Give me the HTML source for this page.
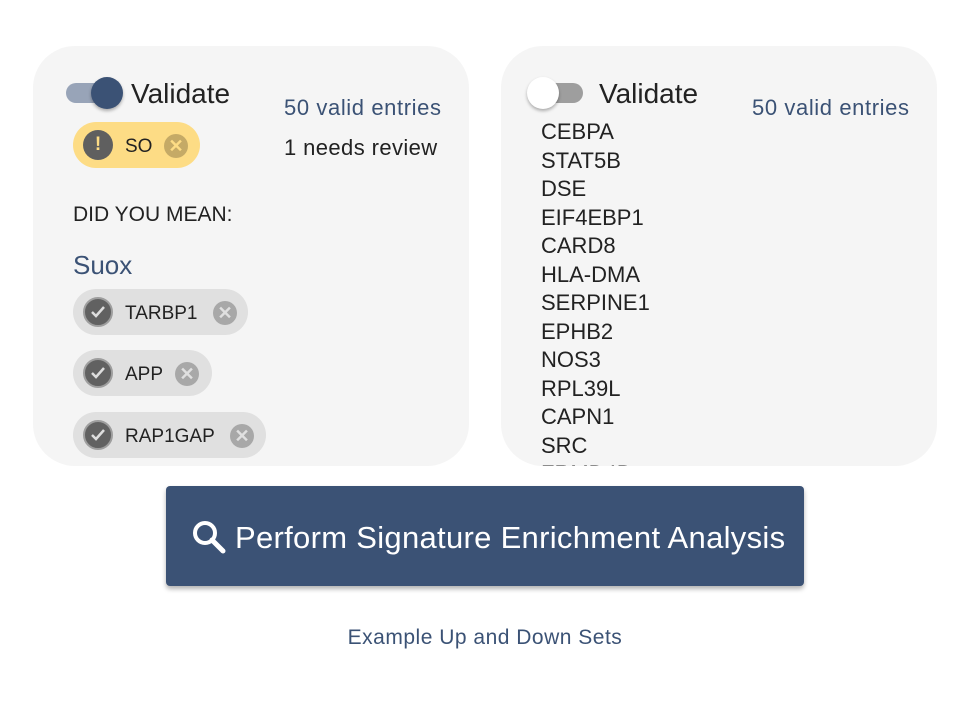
<!DOCTYPE html>
<html><head><style>
body{margin:0;width:974px;height:716px;background:#fff;font-family:"Liberation Sans",sans-serif;position:relative;overflow:hidden;color:#222}
.card{position:absolute;top:46px;width:436px;height:420px;background:#f5f5f5;border-radius:42px;overflow:hidden}
.a{position:absolute;white-space:nowrap}
.blue{color:#3b5275}
.tog{position:absolute;width:44px;height:20px;border-radius:10px}
.knob{position:absolute;width:32px;height:32px;border-radius:50%;box-shadow:0 2px 3px rgba(0,0,0,.3)}
.chip{position:absolute;height:46px;border-radius:23px;background:#e0e0e0;font-size:19px}
.ck{position:absolute;left:10px;top:8px;width:30px;height:30px;border-radius:50%;background:#616161;border:2px solid #9e9e9e;box-sizing:border-box}
.x{position:absolute;top:12px;width:24px;height:24px;border-radius:50%;background:#a8a8a8;color:#e0e0e0;font-size:18px;line-height:24px;text-align:center;font-weight:bold}
.list div{height:28.5px;font-size:22px;line-height:28.5px}
</style></head><body>
<div class="card" style="left:33px">
  <div class="tog" style="left:33px;top:37px;background:#98a4b8"></div>
  <div class="knob" style="left:58px;top:31px;background:#3b5275"></div>
  <div class="a" style="left:98px;top:32px;font-size:28px">Validate</div>
  <div class="a blue" style="left:251px;top:49px;font-size:22px;letter-spacing:.6px">50 valid entries</div>
  <div class="a" style="left:251px;top:89px;font-size:22px;letter-spacing:.4px">1 needs review</div>
  <div class="chip" style="left:40px;top:76px;width:127px;background:#fddc85">
    <div style="position:absolute;left:10px;top:8px;width:30px;height:30px;border-radius:50%;background:#5f5f5f;color:#fddc85;text-align:center;font-weight:bold;font-size:19px;line-height:30px">!</div>
    <div class="a" style="left:52px;top:14px">SO</div>
    <div class="x" style="left:91px;background:#c5aa66;color:#fddc85">✕</div>
  </div>
  <div class="a" style="left:40px;top:157px;font-size:21px">DID YOU MEAN:</div>
  <div class="a blue" style="left:40px;top:204px;font-size:26px">Suox</div>
  <div class="chip" style="left:40px;top:243px;width:175px"><div class="ck"></div><svg class="a" style="left:17px;top:16px" width="16" height="14"><path d="M2 7l4 4 8-9" stroke="#ddd" stroke-width="2.5" fill="none"/></svg><div class="a" style="left:52px;top:14px">TARBP1</div><div class="x" style="left:140px">✕</div></div>
  <div class="chip" style="left:40px;top:304px;width:139px"><div class="ck"></div><svg class="a" style="left:17px;top:16px" width="16" height="14"><path d="M2 7l4 4 8-9" stroke="#ddd" stroke-width="2.5" fill="none"/></svg><div class="a" style="left:52px;top:14px">APP</div><div class="x" style="left:102px">✕</div></div>
  <div class="chip" style="left:40px;top:366px;width:193px"><div class="ck"></div><svg class="a" style="left:17px;top:16px" width="16" height="14"><path d="M2 7l4 4 8-9" stroke="#ddd" stroke-width="2.5" fill="none"/></svg><div class="a" style="left:52px;top:14px">RAP1GAP</div><div class="x" style="left:157px">✕</div></div>
</div>
<div class="card" style="left:501px">
  <div class="tog" style="left:38px;top:37px;background:#9e9e9e"></div>
  <div class="knob" style="left:26px;top:31px;background:#fff"></div>
  <div class="a" style="left:98px;top:32px;font-size:28px">Validate</div>
  <div class="a blue" style="left:251px;top:49px;font-size:22px;letter-spacing:.6px">50 valid entries</div>
  <div class="a list" style="left:40px;top:72px">
    <div>CEBPA</div><div>STAT5B</div><div>DSE</div><div>EIF4EBP1</div><div>CARD8</div><div>HLA-DMA</div><div>SERPINE1</div><div>EPHB2</div><div>NOS3</div><div>RPL39L</div><div>CAPN1</div><div>SRC</div><div>FRMD4B</div>
  </div>
</div>
<div class="a" style="left:166px;top:486px;width:638px;height:100px;background:#3b5275;border-radius:4px;box-shadow:0 3px 5px rgba(0,0,0,.3)">
  <svg class="a" style="left:25px;top:33px" width="36" height="36"><circle cx="14" cy="14" r="10" stroke="#fff" stroke-width="4" fill="none"/><path d="M21 21l11 11" stroke="#fff" stroke-width="5" stroke-linecap="round"/></svg>
  <div class="a" style="left:69px;top:34px;font-size:31px;letter-spacing:.3px;color:#fff">Perform Signature Enrichment Analysis</div>
</div>
<div class="a blue" style="left:0;width:970px;text-align:center;top:626px;font-size:21px;letter-spacing:.5px">Example Up and Down Sets</div>
</body></html>
